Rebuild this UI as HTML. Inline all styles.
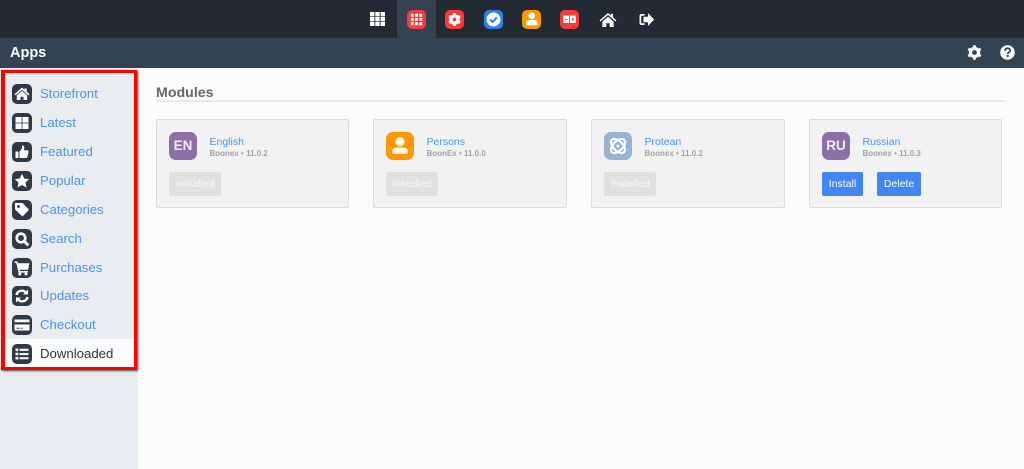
<!DOCTYPE html>
<html><head><meta charset="utf-8"><style>
html,body{margin:0;padding:0;width:1024px;height:469px;overflow:hidden;background:#fbfcfe;font-family:"Liberation Sans",sans-serif}
.a{position:absolute}
#top{left:0;top:0;width:1024px;height:38px;background:#232a33}
#sub{left:0;top:38px;width:1024px;height:30px;background:#334354}
#act{left:397px;top:0;width:39px;height:38px;background:#334354}
.ti{position:absolute;top:10px;width:19px;height:19px;border-radius:5px}
.ti svg,.si svg{display:block;width:100%;height:100%}
#side{left:0;top:68px;width:138px;height:401px;background:#e9edef}
#red{left:1px;top:70px;width:129px;height:294px;border:3px solid #f00;border-left-width:4px;box-shadow:1px 1px 2px rgba(0,0,0,.7)}
#sel{left:5px;top:339px;width:129px;height:28px;background:#fbfcfe}
.si{position:absolute;left:12px;width:20px;height:20px;border-radius:5px;background:#2f3a47}
.sl{position:absolute;left:40px;margin-top:1px;font-size:13.2px;line-height:18px;color:#4b92f7}
h2{position:absolute;margin:0;left:156px;top:85px;font-size:14.2px;line-height:17px;font-weight:bold;color:#666}
#hr{left:156px;top:100px;width:850px;height:2px;background:#e8eaed}
.card{position:absolute;top:119px;width:191px;height:87px;background:#f2f2f2;border:1px solid #dcdcdc;border-radius:2px}
.ic{position:absolute;left:12px;top:12px;width:28px;height:28px;border-radius:7px;color:#f2eef6;font-size:13.5px;font-weight:bold;line-height:28px;text-align:center}
.ic svg{display:block;width:100%;height:100%}
.nm{position:absolute;left:52.5px;top:15.5px;font-size:10.5px;line-height:13px;color:#4b92f7}
.vr{position:absolute;left:52.5px;top:27.5px;font-size:8px;line-height:11px;color:#a3a3a3;font-weight:bold;white-space:nowrap}
.b{position:absolute;top:52px;height:24px;line-height:24px;border-radius:2px;font-size:10.5px;text-align:center;color:#fff}
.off{left:12px;width:52px;background:#dfe0e0;color:#f6f6f6}
.on{background:#4285f4}
</style></head><body>
<div class="a" id="top"></div>
<div class="a" id="sub"></div>
<div class="a" id="act"></div>

<svg class="a" style="left:370px;top:12px;width:15px;height:14px" viewBox="0 0 15 14" fill="#fff"><path d="M0 0h4.4v4.2H0zM5.3 0h4.4v4.2H5.3zM10.6 0H15v4.2h-4.4zM0 4.9h4.4v4.2H0zM5.3 4.9h4.4v4.2H5.3zM10.6 4.9H15v4.2h-4.4zM0 9.800h4.400V14H0zM5.300 9.800h4.400V14H5.300zM10.600 9.800H15V14h-4.400z"/></svg>

<div class="ti" style="left:407px;background:#fa3a3a"><svg viewBox="0 0 19 19" fill="#fff"><path d="M3.800 3.800h2.900v2.900H3.800zM8 3.800h2.900v2.900H8zM12.300 3.800h2.900v2.900h-2.900zM3.800 8h2.900v2.900H3.800zM8 8h2.900v2.900H8zM12.300 8h2.900v2.900h-2.900zM3.800 12.300h2.900v2.900H3.800zM8 12.300h2.900v2.900H8zM12.300 12.300h2.900v2.900h-2.900z"/></svg></div>
<div class="ti" style="left:445px;background:#fa3a3a"><svg viewBox="0 0 19 19"><circle cx="9.500" cy="9.500" r="3.600" fill="none" stroke="#fff" stroke-width="3.400"/><path d="M9.500 3v2.500M9.500 13.500V16M3.900 6.300l2.200 1.200M12.900 11.500l2.200 1.200M3.900 12.700l2.200-1.200M12.900 7.500l2.200-1.200" stroke="#fff" stroke-width="2.800"/></svg></div>
<div class="ti" style="left:484px;background:#2a82f0"><svg viewBox="0 0 19 19"><circle cx="9.500" cy="9.500" r="7" fill="#fff"/><path d="M6.300 9.600l2.300 2.300 4.200-4.400" fill="none" stroke="#2a82f0" stroke-width="2"/></svg></div>
<div class="ti" style="left:522px;background:#ff9800"><svg viewBox="0 0 19 19" fill="#fff"><circle cx="9.700" cy="5.800" r="3.300"/><path d="M4 15.200v-2.400c0-1.700 1.300-2.900 3-2.900h5.500c1.700 0 3 1.200 3 2.900v2.400z"/></svg></div>
<div class="ti" style="left:560px;background:#fa3a3a"><svg viewBox="0 0 19 19"><path d="M3.300 5.500h5.800v7.500H3.300zM10 5.500h5.800v7.500H10z" fill="#fff"/><path d="M5 9.300h2.400M11.700 9.300h2.400M12.900 8v2.600" stroke="#fa3a3a" stroke-width="1.100"/></svg></div>
<svg class="a" style="left:599px;top:13px;width:18px;height:14px" viewBox="0 0 18 15" fill="#fff"><path d="M9 0l3 2.600V1h2.400v3.700L18 7.900l-1 1.100L9 2.100 1 9 0 7.900z"/><path d="M3 9.200L9 4l6 5.200V15h-4.200v-4H7.200v4H3z"/></svg>
<svg class="a" style="left:639px;top:13px;width:15px;height:13px" viewBox="0 0 15 13" fill="#fff"><path d="M5.500 1H2.500C1.200 1 .5 1.800.5 3v7c0 1.200.7 2 2 2h3v-1.700H2.800c-.4 0-.6-.2-.6-.6V3.300c0-.4.2-.6.600-.6h2.700z"/><path d="M9 0l6 6.500L9 13V9.300H4.500V3.700H9z"/></svg>

<div class="a" style="left:10px;top:45px;font-size:14.500px;line-height:17px;font-weight:bold;color:#fff">Apps</div>

<svg class="a" style="left:967px;top:45px;width:15px;height:15px" viewBox="0 0 15 15"><circle cx="7.500" cy="7.500" r="4" fill="none" stroke="#fff" stroke-width="3.200"/><path d="M7.500 .3v3M7.500 11.700v3M1.300 3.900l2.600 1.500M11.100 9.600l2.600 1.500M1.300 11.100l2.600-1.500M11.100 5.400l2.600-1.500" stroke="#fff" stroke-width="2.800"/></svg>
<svg class="a" style="left:1000px;top:45px;width:15px;height:15px" viewBox="0 0 15 15"><circle cx="7.500" cy="7.500" r="7.300" fill="#fff"/><path d="M5 5.700c0-1.500 1.100-2.400 2.600-2.400s2.500.9 2.500 2.200c0 1.900-2.400 1.900-2.400 3.500" fill="none" stroke="#334354" stroke-width="1.800"/><path d="M6.700 10h2v1.900h-2z" fill="#334354"/></svg>

<div class="a" id="side"></div>
<div class="a" id="sel"></div>
<div class="a" id="red"></div>

<div class="si" style="top:84px"><svg viewBox="0 0 20 20" fill="#fff"><path d="M10 3.500l2.500 2.200V4.500h2.200v3.200l2.800 2.600-1 1.100L10 5.700l-6.500 5.700-1-1.100z"/><path d="M4.800 11.300L10 6.900l5.200 4.400V16h-3.700v-3.300h-3V16H4.800z"/></svg></div>
<div class="sl" style="top:84px">Storefront</div>
<div class="si" style="top:113px"><svg viewBox="0 0 20 20" fill="#fff"><path d="M3.500 4h6.100v5.600H3.500zM10.400 4h6.100v5.600h-6.100zM3.500 10.400h6.100V16H3.500zM10.400 10.400h6.100V16h-6.100z"/></svg></div>
<div class="sl" style="top:113px">Latest</div>
<div class="si" style="top:142px"><svg viewBox="0 0 20 20" fill="#fff"><path d="M3.500 9.500h3V16h-3zM7.500 9.500l2.500-3V3.500c1.700 0 2.300 1 2.300 2.300 0 .9-.3 1.700-.6 2.500h3.500c1.200 0 1.500 1 1.300 1.800L15.300 15c-.2.700-.7 1-1.400 1H7.500z"/></svg></div>
<div class="sl" style="top:142px">Featured</div>
<div class="si" style="top:171px"><svg viewBox="0 0 20 20" fill="#fff"><path d="M10 2.800l2.200 4.700 5 .6-3.700 3.400 1 5L10 14l-4.500 2.500 1-5L2.800 8.100l5-.6z"/></svg></div>
<div class="sl" style="top:171px">Popular</div>
<div class="si" style="top:200px"><svg viewBox="0 0 20 20" fill="#fff"><path d="M3 3h7.500l6.500 6.800-6.500 6.700L3 9.500zM6.500 5a1.500 1.500 0 1 0 .01 0z" fill-rule="evenodd"/></svg></div>
<div class="sl" style="top:200px">Categories</div>
<div class="si" style="top:229px"><svg viewBox="0 0 20 20"><circle cx="9" cy="9" r="4.300" fill="none" stroke="#fff" stroke-width="2.600"/><path d="M12 12l4.300 4.300" stroke="#fff" stroke-width="3"/></svg></div>
<div class="sl" style="top:229px">Search</div>
<div class="si" style="top:258px"><svg viewBox="0 0 20 20" fill="#fff"><path d="M2.500 3.500h3l.5 1.800h11.500l-1.500 6.500H7.500l.3 1.200h8v1.600H6.500L4.300 5H2.500z"/><circle cx="7.800" cy="16" r="1.500"/><circle cx="14" cy="16" r="1.500"/></svg></div>
<div class="sl" style="top:258px">Purchases</div>
<div class="si" style="top:286px"><svg viewBox="0 0 20 20" fill="none" stroke="#fff" stroke-width="2.400"><path d="M4.500 9c.5-2.700 2.700-4.300 5.400-4.300 1.800 0 3.200.8 4.200 2"/><path d="M15.500 11c-.5 2.700-2.700 4.300-5.400 4.300-1.800 0-3.200-.8-4.200-2"/><path d="M16 3.500v5h-5zM4 16.500v-5h5z" fill="#fff" stroke="none"/></svg></div>
<div class="sl" style="top:286px">Updates</div>
<div class="si" style="top:315px"><svg viewBox="0 0 20 20" fill="#fff"><path d="M2.500 4.500h15v2.800h-15zM2.500 9.500h15v6h-15z"/><path d="M4.500 12.700h3v1h-3zM8.500 12.700h2v1h-2z" fill="#2f3a47"/></svg></div>
<div class="sl" style="top:315px">Checkout</div>
<div class="si" style="top:344px"><svg viewBox="0 0 20 20" fill="#fff"><path d="M3.500 4.500h2.800v2.600H3.500zM3.500 8.700h2.800v2.600H3.500zM3.500 12.900h2.800v2.600H3.500zM7.500 4.800h9v2.100h-9zM7.500 9h9v2.100h-9zM7.500 13.200h9v2.100h-9z"/></svg></div>
<div class="sl" style="top:344px;color:#333">Downloaded</div>

<h2>Modules</h2>
<div class="a" id="hr"></div>

<div class="card" style="left:156px">
<div class="ic" style="background:#8c6fa9">EN</div>
<div class="nm">English</div><div class="vr">Boonex • 11.0.2</div>
<div class="b off">Installed</div></div>

<div class="card" style="left:373px;width:192px">
<div class="ic" style="background:#ff9800"><svg viewBox="0 0 29 29" fill="#fff8ec"><circle cx="14.500" cy="10" r="4.700"/><path d="M6.500 22.500v-2.500c0-2.500 2-4 4.200-4h7.600c2.200 0 4.200 1.500 4.200 4v2.500z"/></svg></div>
<div class="nm">Persons</div><div class="vr">BoonEx • 11.0.0</div>
<div class="b off">Installed</div></div>

<div class="card" style="left:591px;width:192px">
<div class="ic" style="background:#97b3d6"><svg viewBox="0 0 29 29" fill="none" stroke="#fff" stroke-width="2.200"><ellipse cx="14.500" cy="14.500" rx="9" ry="5" transform="rotate(45 14.500 14.500)"/><ellipse cx="14.500" cy="14.500" rx="9" ry="5" transform="rotate(-45 14.500 14.500)"/><circle cx="14.500" cy="14.500" r="1.500" fill="#fff" stroke="none"/></svg></div>
<div class="nm">Protean</div><div class="vr">Boonex • 11.0.2</div>
<div class="b off">Installed</div></div>

<div class="card" style="left:809px">
<div class="ic" style="background:#8c6fa9">RU</div>
<div class="nm">Russian</div><div class="vr">Boonex • 11.0.3</div>
<div class="b on" style="left:12px;width:41px">Install</div>
<div class="b on" style="left:67px;width:44px">Delete</div></div>
</body></html>
